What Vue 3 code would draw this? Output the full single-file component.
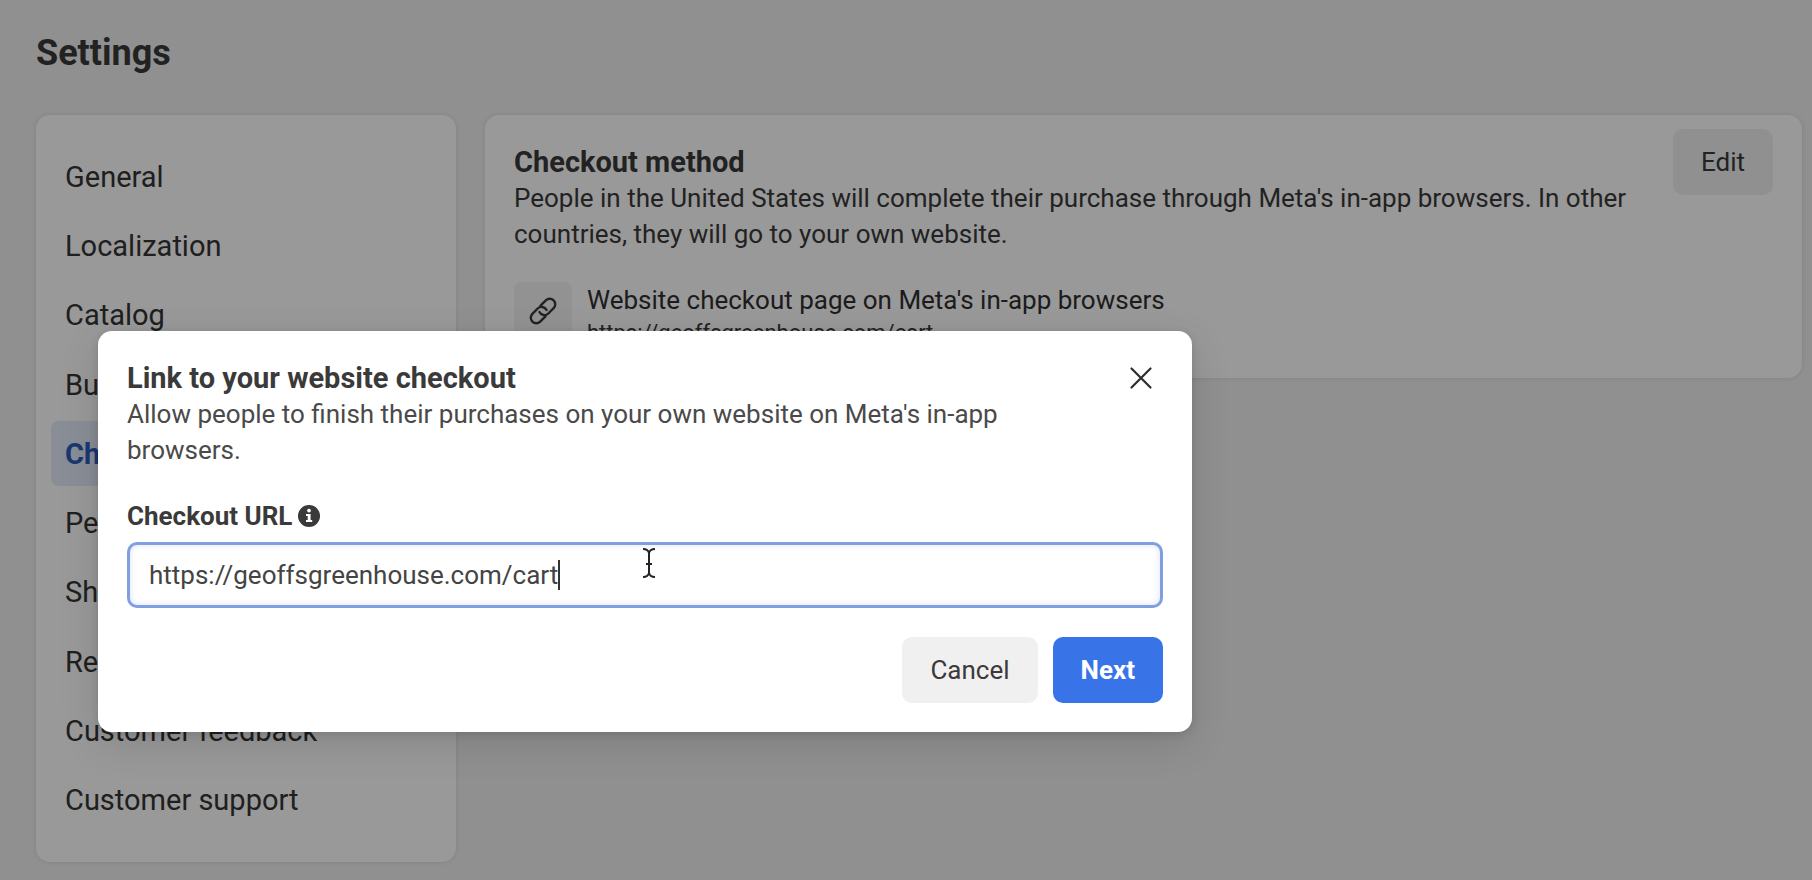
<script setup>
import { ref } from 'vue'

const sections = [
  'General',
  'Localization',
  'Catalog',
  'Business assets',
  'Checkout',
  'Permissions',
  'Shipping',
  'Returns',
  'Customer feedback',
  'Customer support',
]
const active = ref('Checkout')
const checkoutUrl = ref('https://geoffsgreenhouse.com/cart')
</script>

<template>
  <div class="page">
    <h1 class="page-title">Settings</h1>
    <div class="layout">
      <nav class="card sidebar" aria-label="Settings sections">
        <a
          v-for="name in sections"
          :key="name"
          href="#"
          class="nav-item"
          :class="{ active: name === active }"
          @click.prevent="active = name"
        >{{ name }}</a>
      </nav>

      <main class="card method">
        <div class="method-head">
          <div class="method-text">
            <h2 class="heading">Checkout method</h2>
            <p class="body">
              People in the United States will complete their purchase through Meta's in-app
              browsers. In other countries, they will go to your own website.
            </p>
          </div>
          <button type="button" class="btn edit">Edit</button>
        </div>
        <div class="link-row">
          <span class="link-icon">
            <svg viewBox="0 0 30 30" width="30" height="30" fill="none" stroke="currentColor" stroke-width="2.4" stroke-linecap="round" aria-hidden="true">
              <g transform="rotate(-45 15 15)">
                <path d="M13 20.500H5.500a5.500 5.500 0 0 1 0-11H13a5.500 5.500 0 0 1 5.200 7.300" />
                <path d="M17 9.500h7.500a5.500 5.500 0 0 1 0 11H17a5.500 5.500 0 0 1-5.200-7.300" />
              </g>
            </svg>
          </span>
          <div>
            <div class="link-title">Website checkout page on Meta's in-app browsers</div>
            <div class="link-url">https://geoffsgreenhouse.com/cart</div>
          </div>
        </div>
      </main>
    </div>

    <div class="overlay">
      <section class="dialog" role="dialog" aria-modal="true" aria-labelledby="dialog-title">
        <header class="dialog-head">
          <div class="dialog-text">
            <h2 id="dialog-title" class="heading">Link to your website checkout</h2>
            <p class="body">
              Allow people to finish their purchases on your own website on Meta's in-app browsers.
            </p>
          </div>
          <button type="button" class="close" aria-label="Close">
            <svg viewBox="0 0 24 24" width="24" height="24" fill="none" stroke="currentColor" stroke-width="2.2" stroke-linecap="round" aria-hidden="true">
              <path d="M2.500 2.500l19 19M21.500 2.500l-19 19" />
            </svg>
          </button>
        </header>

        <div class="field-label">
          <label for="checkout-url">Checkout URL</label>
          <svg viewBox="0 0 22 22" width="22" height="22" aria-hidden="true">
            <circle cx="11" cy="11" r="11" fill="#3a3a3a" />
            <circle cx="11" cy="5.6" r="1.9" fill="#fff" />
            <path d="M8 9h4.600v6h1.600v2H8v-2h1.700v-4H8z" fill="#fff" />
          </svg>
        </div>
        <div class="field">
          <input id="checkout-url" v-model="checkoutUrl" type="text" class="url-input" spellcheck="false" />
          <span class="caret"></span>
          <svg class="pointer" viewBox="0 0 14 32" width="14" height="32" fill="none" stroke="#222" stroke-width="2" aria-hidden="true">
            <path d="M1 2q5 0 6 4q1-4 6-4M7 6v20M1 30q5 0 6-4q1 4 6 4M4 17h6" />
          </svg>
        </div>

        <footer class="actions">
          <button type="button" class="btn">Cancel</button>
          <button type="button" class="btn primary">Next</button>
        </footer>
      </section>
    </div>
  </div>
</template>

<style>
body {
  margin: 0;
  background: #f0f0f0;
}
</style>

<style scoped>
.page {
  position: relative;
  box-sizing: border-box;
  display: flex;
  flex-direction: column;
  min-height: 100vh;
  padding: 33px 10px 18px 36px;
  background: #f0f0f0;
  color: #3a3a3a;
  font-family: Roboto, "Liberation Sans", sans-serif;
  font-size: 26px;
  line-height: 36px;
}
h1,
h2,
p {
  margin: 0;
}
.page-title {
  margin-bottom: 42px;
  font-size: 36px;
  font-weight: 700;
  line-height: 40px;
}
.layout {
  display: flex;
  flex: 1;
  gap: 29px;
}
.card {
  box-sizing: border-box;
  border-radius: 14px;
  background: #fff;
  box-shadow: 0 0 5px rgba(0, 0, 0, 0.1);
}
.sidebar {
  display: flex;
  flex: 0 0 420px;
  flex-direction: column;
  gap: 4px;
  padding: 29px 15px;
}
.nav-item {
  display: flex;
  flex: 1;
  align-items: center;
  padding: 0 14px;
  border-radius: 8px;
  color: #343434;
  font-size: 29px;
  text-decoration: none;
}
.nav-item.active {
  background: #e4ecf9;
  color: #2b5cbe;
  font-weight: 700;
}
.method {
  flex: 1;
  align-self: flex-start;
  padding: 14px 29px 30px;
}
.method-head {
  display: flex;
  align-items: flex-start;
  justify-content: space-between;
}
.method-text {
  max-width: 1140px;
  padding-top: 15px;
}
.heading {
  font-size: 29px;
  font-weight: 700;
  line-height: 36px;
}
.btn {
  height: 66px;
  padding: 0 28px;
  border: 0;
  border-radius: 10px;
  background: #f0f0f0;
  color: #3a3a3a;
  font: inherit;
}
.edit {
  flex: none;
}
.link-row {
  display: flex;
  gap: 15px;
  margin-top: 30px;
}
.link-icon {
  display: flex;
  flex: none;
  align-items: center;
  justify-content: center;
  width: 58px;
  height: 58px;
  border-radius: 8px;
  background: #f3f3f3;
}
.link-title {
  color: #303030;
}
.link-url {
  font-size: 22px;
  line-height: 30px;
}
.overlay {
  position: absolute;
  inset: 0;
  box-sizing: border-box;
  padding: 331px 620px 0 98px;
  background: rgba(0, 0, 0, 0.4);
}
.dialog {
  padding: 29px;
  border-radius: 14px;
  background: #fff;
  color: #3a3a3a;
  box-shadow: 0 12px 40px rgba(0, 0, 0, 0.12), 0 2px 8px rgba(0, 0, 0, 0.12);
}
.dialog-head {
  display: flex;
  align-items: flex-start;
  justify-content: space-between;
}
.dialog-text {
  max-width: 900px;
}
.dialog-text .body {
  color: #4a4a4a;
}
.close {
  display: flex;
  align-items: center;
  justify-content: center;
  width: 44px;
  height: 36px;
  padding: 0;
  border: 0;
  background: none;
  color: #2c2c2c;
}
.field-label {
  display: flex;
  align-items: center;
  gap: 6px;
  margin: 30px 0 8px;
  font-weight: 700;
}
.field {
  position: relative;
}
.url-input {
  display: block;
  box-sizing: border-box;
  width: 100%;
  height: 66px;
  padding: 0 19px;
  border: 3px solid #809fdf;
  border-radius: 10px;
  outline: 0;
  background: #fff;
  color: #444;
  box-shadow: inset 0 0 6px rgba(70, 110, 240, 0.2);
  font: inherit;
}
.caret {
  position: absolute;
  top: 18px;
  left: 431px;
  width: 2px;
  height: 30px;
  background: #333;
}
.pointer {
  position: absolute;
  top: 5px;
  left: 515px;
}
.actions {
  display: flex;
  justify-content: flex-end;
  gap: 15px;
  margin-top: 29px;
}
.primary {
  background: #3874e8;
  color: #fff;
  font-weight: 700;
}
</style>
